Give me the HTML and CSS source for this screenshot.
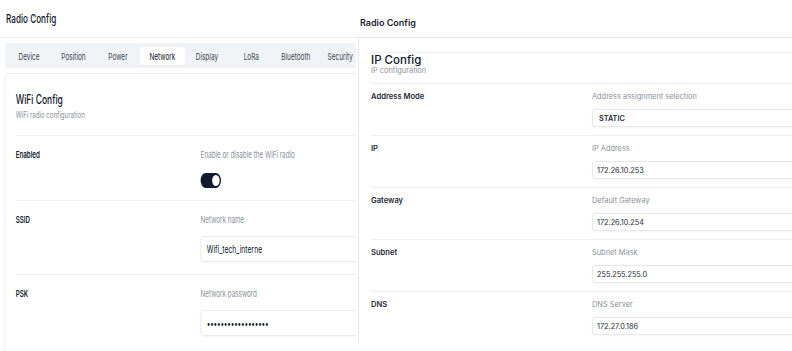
FILE: index.html
```html
<!DOCTYPE html>
<html lang="en">
<head>
    <meta charset="UTF-8">
    <meta name="viewport" content="width=device-width, initial-scale=1.0">
    <title>Radio Config</title>
    <link rel="stylesheet" href="styles.css">
</head>
<body>
    <!-- left capture: network tab, wifi section -->
    <section class="pane pane-left">
        <div class="squeeze">
            <header class="pane-head">Radio Config</header>

            <nav class="tabs">
                <span class="tab">Device</span>
                <span class="tab">Position</span>
                <span class="tab">Power</span>
                <span class="tab active">Network</span>
                <span class="tab">Display</span>
                <span class="tab">LoRa</span>
                <span class="tab">Bluetooth</span>
                <span class="tab">Security</span>
            </nav>

            <div class="card">
                <div class="card-head">
                    <h2>WiFi Config</h2>
                    <p>WiFi radio configuration</p>
                </div>

                <div class="row">
                    <div class="row-label">Enabled</div>
                    <div class="row-field">
                        <div class="row-desc">Enable or disable the WiFi radio</div>
                        <div class="toggle on"><span class="knob"></span></div>
                    </div>
                </div>

                <div class="row">
                    <div class="row-label">SSID</div>
                    <div class="row-field">
                        <div class="row-desc">Network name</div>
                        <input class="input" type="text" value="Wifi_tech_interne" readonly>
                    </div>
                </div>

                <div class="row">
                    <div class="row-label">PSK</div>
                    <div class="row-field">
                        <div class="row-desc">Network password</div>
                        <input class="input" type="password" value="abcdefghijklmnopqr" readonly>
                    </div>
                </div>
            </div>
        </div>
    </section>

    <!-- right capture: ip config section -->
    <section class="pane pane-right">
        <header class="pane-head">Radio Config</header>
        <div class="pane-body">
            <div class="section">
                <div class="section-head">
                    <h2>IP Config</h2>
                    <p>IP configuration</p>
                </div>

                <div class="row">
                    <div class="row-label">Address Mode</div>
                    <div class="row-field">
                        <div class="row-desc">Address assignment selection</div>
                        <div class="input select">STATIC</div>
                    </div>
                </div>

                <div class="row">
                    <div class="row-label">IP</div>
                    <div class="row-field">
                        <div class="row-desc">IP Address</div>
                        <div class="input">172.26.10.253</div>
                    </div>
                </div>

                <div class="row">
                    <div class="row-label">Gateway</div>
                    <div class="row-field">
                        <div class="row-desc">Default Gateway</div>
                        <div class="input">172.26.10.254</div>
                    </div>
                </div>

                <div class="row">
                    <div class="row-label">Subnet</div>
                    <div class="row-field">
                        <div class="row-desc">Subnet Mask</div>
                        <div class="input">255.255.255.0</div>
                    </div>
                </div>

                <div class="row">
                    <div class="row-label">DNS</div>
                    <div class="row-field">
                        <div class="row-desc">DNS Server</div>
                        <div class="input">172.27.0.186</div>
                    </div>
                </div>
            </div>
        </div>
    </section>
</body>
</html>
```

FILE: styles.css
```css
:root {
    --text-primary: #0f172a;
    --text-secondary: #8b919b;
    --border-color: #e6e8ec;
    --divider: #eef0f3;
    --tabs-bg: #f1f4f7;
}

* {
    margin: 0;
    padding: 0;
    box-sizing: border-box;
    font-family: 'Inter', 'Noto Sans', sans-serif;
}

body {
    background: #ffffff;
    color: var(--text-primary);
    display: flex;
    height: 351px;
    overflow: hidden;
}

.pane {
    height: 100%;
    overflow: hidden;
}

/* ---------- left pane (captured narrower) ---------- */

.pane-left {
    width: 356px;
    flex-shrink: 0;
}

.squeeze {
    width: 524px;
    transform: scaleX(0.68);
    transform-origin: left top;
}

.pane-left .pane-head {
    height: 38px;
    padding-left: 9px;
    display: flex;
    align-items: center;
    font-size: 12px;
    font-weight: 500;
    border-bottom: 1px solid var(--divider);
}

.tabs {
    margin: 5px 0 0 7px;
    width: 540px;
    height: 25px;
    padding: 4px 3px 3px;
    background: var(--tabs-bg);
    border-radius: 4px;
    display: grid;
    grid-template-columns: repeat(8, 65.4px);
}

.tab {
    display: flex;
    align-items: center;
    justify-content: center;
    font-size: 9.5px;
    color: #3f4652;
    border-radius: 3px;
}

.tab.active {
    background: #ffffff;
    color: var(--text-primary);
    box-shadow: 0 1px 2px rgba(0, 0, 0, 0.04);
}

.card {
    margin: 5px 0 0 7px;
    width: 640px;
    height: 400px;
    padding: 0 15px;
    border: 1px solid var(--border-color);
    border-radius: 5px;
}

.card-head {
    padding: 18px 0 14px;
}

.card-head h2 {
    font-size: 12.5px;
    font-weight: 500;
    line-height: 16px;
}

.card-head p {
    margin-top: 1px;
    font-size: 9px;
    line-height: 12px;
    color: var(--text-secondary);
}

.pane-left .row {
    display: grid;
    grid-template-columns: 272px 1fr;
    padding: 13px 0 12px;
    border-top: 1px solid var(--divider);
}

.pane-left .row:first-of-type {
    padding: 12px 0 14px;
}

.pane-left .row-label {
    font-size: 9.2px;
    font-weight: 600;
    line-height: 12px;
}

.pane-left .row-desc {
    font-size: 9.3px;
    line-height: 12px;
    color: var(--text-secondary);
}

.pane-left .row-field {
    display: flex;
    flex-direction: column;
    gap: 10px;
}

.toggle {
    margin-top: 2px;
    width: 30px;
    height: 15px;
    border-radius: 8px;
    background: #111a2e;
    display: flex;
    align-items: center;
    justify-content: flex-end;
    padding: 0 2px;
}

.knob {
    width: 11px;
    height: 11px;
    border-radius: 50%;
    background: #ffffff;
}

.pane-left .input {
    height: 26px;
    width: 100%;
    padding: 0 8px;
    border: 1px solid var(--border-color);
    border-radius: 5px;
    font-size: 10px;
    color: var(--text-primary);
    background: #ffffff;
    box-shadow: 0 1px 2px rgba(0, 0, 0, 0.04);
    outline: none;
}

.pane-left input[type="password"] {
    font-size: 9.5px;
    letter-spacing: -0.3px;
}

/* ---------- right pane ---------- */

.pane-right {
    flex: 1;
}

.pane-right .pane-head {
    height: 38px;
    padding: 8px 0 0 4px;
    display: flex;
    align-items: center;
    font-size: 9px;
    font-weight: 600;
    color: #1e2433;
    border-bottom: 1px solid var(--border-color);
}

.pane-body {
    margin-left: 2px;
    border-left: 1px solid var(--border-color);
}

.section {
    padding: 14px 0 0 12px;
    width: 560px;
}

.section-head {
    border-top: 1px solid var(--divider);
    padding: 1px 0 8px;
}

.section-head h2 {
    font-size: 11.5px;
    font-weight: 500;
    line-height: 12px;
    color: #111827;
}

.section-head p {
    font-size: 7.4px;
    line-height: 9px;
    color: var(--text-secondary);
}

.pane-right .row {
    display: grid;
    grid-template-columns: 221px 1fr;
    padding: 8px 0;
    border-top: 1px solid var(--divider);
}

.pane-right .row-label {
    font-size: 7.6px;
    font-weight: 600;
    line-height: 10px;
    color: #1f2937;
}

.pane-right .row-desc {
    font-size: 7.4px;
    line-height: 10px;
    color: var(--text-secondary);
}

.pane-right .row-field {
    display: flex;
    flex-direction: column;
    gap: 7px;
}

.pane-right .input {
    height: 18px;
    padding-left: 4px;
    display: flex;
    align-items: center;
    border: 1px solid var(--border-color);
    border-radius: 3px;
    font-size: 7.3px;
    color: #1f2937;
    box-shadow: 0 1px 2px rgba(0, 0, 0, 0.04);
}

.pane-right .input.select {
    padding-left: 6px;
    font-weight: 600;
}
```
